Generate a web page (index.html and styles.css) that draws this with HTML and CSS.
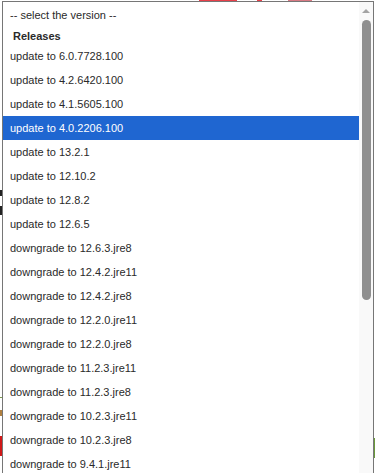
FILE: index.html
```html
<!DOCTYPE html>
<html>
<head>
<meta charset="utf-8">
<link rel="stylesheet" href="styles.css">
</head>
<body>
<div class="page">
  <div class="deco d-top1"></div>
  <div class="deco d-top2"></div>
  <div class="deco d-top3"></div>
  <div class="deco d-left1"></div>
  <div class="deco d-left2"></div>
  <div class="deco d-green"></div>
  <div class="deco d-orange"></div>
  <div class="deco d-red"></div>
  <div class="deco d-right"></div>

  <div class="popup">
    <div class="list">
      <div class="opt first">-- select the version --</div>
      <div class="group">Releases</div>
      <div class="opt">update to 6.0.7728.100</div>
      <div class="opt">update to 4.2.6420.100</div>
      <div class="opt">update to 4.1.5605.100</div>
      <div class="opt selected">update to 4.0.2206.100</div>
      <div class="opt">update to 13.2.1</div>
      <div class="opt">update to 12.10.2</div>
      <div class="opt">update to 12.8.2</div>
      <div class="opt">update to 12.6.5</div>
      <div class="opt">downgrade to 12.6.3.jre8</div>
      <div class="opt">downgrade to 12.4.2.jre11</div>
      <div class="opt">downgrade to 12.4.2.jre8</div>
      <div class="opt">downgrade to 12.2.0.jre11</div>
      <div class="opt">downgrade to 12.2.0.jre8</div>
      <div class="opt">downgrade to 11.2.3.jre11</div>
      <div class="opt">downgrade to 11.2.3.jre8</div>
      <div class="opt">downgrade to 10.2.3.jre11</div>
      <div class="opt">downgrade to 10.2.3.jre8</div>
      <div class="opt">downgrade to 9.4.1.jre11</div>
    </div>
    <div class="scrollbar">
      <div class="arrow up"></div>
      <div class="thumb"></div>
      <div class="track-rest"></div>
      <div class="arrow down"></div>
    </div>
  </div>
</div>
</body>
</html>
```

FILE: styles.css
```css
html, body {
  margin: 0;
  padding: 0;
  background: #ffffff;
}

.page {
  position: relative;
  width: 375px;
  height: 473px;
  overflow: hidden;
  font-family: "Liberation Sans", Arial, sans-serif;
}

.deco {
  position: absolute;
}
.d-top1 { left: 199px; top: 0; width: 38px; height: 1px; background: #e8404a; }
.d-top2 { left: 257px; top: 0; width: 5px; height: 1px; background: #e8404a; }
.d-top3 { left: 288px; top: 0; width: 24px; height: 1px; background: #d87a84; }
.d-left1 { left: 0; top: 190px; width: 2px; height: 6px; background: #222; }
.d-left2 { left: 0; top: 206px; width: 2px; height: 9px; background: #222; }
.d-green { left: 0; top: 397px; width: 2px; height: 1px; background: #7a9a4a; }
.d-orange { left: 0; top: 410px; width: 2px; height: 6px; background: #b08040; }
.d-red { left: 0; top: 436px; width: 2px; height: 20px; background: #d01818; }
.d-right { left: 374px; top: 438px; width: 1px; height: 20px; background: #6a9a3a; }

.popup {
  position: absolute;
  left: 2px;
  top: 1px;
  width: 372px;
  height: 495px;
  box-sizing: border-box;
  border: 1px solid #767676;
  background: #ffffff;
  display: flex;
  overflow: hidden;
}

.list {
  flex: 1;
  display: flex;
  flex-direction: column;
  padding-top: 1px;
  font-size: 11px;
  color: #2a2a2a;
}

.opt {
  height: 24px;
  line-height: 24px;
  padding-left: 7px;
  white-space: nowrap;
  flex-shrink: 0;
}

.opt.first {
  height: 22px;
  line-height: 24px;
}

.group {
  height: 19px;
  line-height: 22px;
  padding-left: 10px;
  font-weight: bold;
  flex-shrink: 0;
}

.opt.selected {
  background: #1f66d1;
  color: #ffffff;
}

.scrollbar {
  width: 14px;
  flex-shrink: 0;
  background: #f9f9f9;
  display: flex;
  flex-direction: column;
  align-items: center;
}

.arrow {
  width: 0;
  height: 0;
  border-left: 4px solid transparent;
  border-right: 4px solid transparent;
}

.arrow.up {
  margin-top: 7px;
  border-bottom: 4px solid #a3a3a3;
}

.arrow.down {
  margin-top: 4px;
  border-top: 4px solid #a3a3a3;
}

.thumb {
  margin-top: 7px;
  width: 9px;
  height: 280px;
  border-radius: 5px;
  background: #8f8f8f;
}

.track-rest {
  height: 169px;
}
```
